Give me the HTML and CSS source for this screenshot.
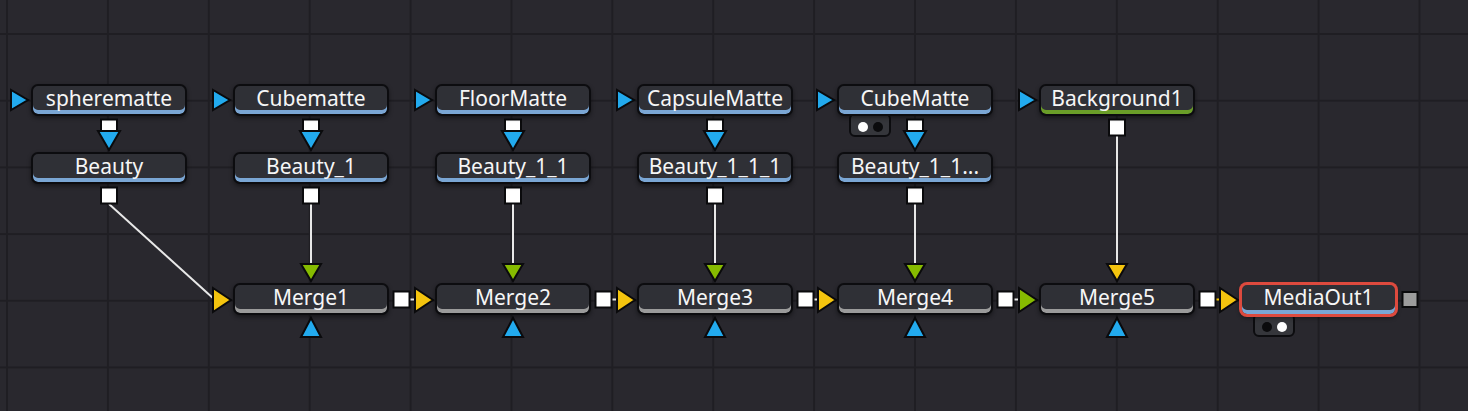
FILE: index.html
```html
<!DOCTYPE html>
<html>
<head>
<meta charset="utf-8">
<link rel="stylesheet" href="styles.css">
</head>
<body>
<div class="canvas">
  <svg class="wires" width="1468" height="411" viewBox="0 0 1468 411">
    <g class="links">
      <line x1="109" y1="204" x2="214" y2="299"/>
      <line x1="311" y1="204" x2="311" y2="264"/>
      <line x1="513" y1="204" x2="513" y2="264"/>
      <line x1="715" y1="204" x2="715" y2="264"/>
      <line x1="915" y1="204" x2="915" y2="264"/>
      <line x1="1117" y1="136" x2="1117" y2="264"/>
      <line x1="409" y1="299.5" x2="414" y2="299.5"/>
      <line x1="611" y1="299.5" x2="616" y2="299.5"/>
      <line x1="813" y1="299.5" x2="818" y2="299.5"/>
      <line x1="1013" y1="299.5" x2="1018" y2="299.5"/>
      <line class="yl" x1="1215" y1="299.5" x2="1220" y2="299.5"/>
    </g>
    <g class="ports">
      <polygon class="blue" points="11,90 11,110 28,100"/>
      <polygon class="blue" points="213,90 213,110 230,100"/>
      <polygon class="blue" points="415,90 415,110 432,100"/>
      <polygon class="blue" points="617,90 617,110 634,100"/>
      <polygon class="blue" points="817,90 817,110 834,100"/>
      <polygon class="blue" points="1019,90 1019,110 1036,100"/>
      <rect class="out" x="101" y="119.5" width="16" height="15"/>
      <rect class="out" x="303" y="119.5" width="16" height="15"/>
      <rect class="out" x="505" y="119.5" width="16" height="15"/>
      <rect class="out" x="707" y="119.5" width="16" height="15"/>
      <rect class="out" x="907" y="119.5" width="16" height="15"/>
      <rect class="out" x="1109" y="119.5" width="16" height="16"/>
      <polygon class="blue" points="98,131 120,131 109,150"/>
      <polygon class="blue" points="300,131 322,131 311,150"/>
      <polygon class="blue" points="502,131 524,131 513,150"/>
      <polygon class="blue" points="704,131 726,131 715,150"/>
      <polygon class="blue" points="904,131 926,131 915,150"/>
      <rect class="out" x="101" y="187.5" width="16" height="16"/>
      <rect class="out" x="303" y="187.5" width="16" height="16"/>
      <rect class="out" x="505" y="187.5" width="16" height="16"/>
      <rect class="out" x="707" y="187.5" width="16" height="16"/>
      <rect class="out" x="907" y="187.5" width="16" height="16"/>
      <polygon class="green" points="301,264 321,264 311,281"/>
      <polygon class="green" points="503,264 523,264 513,281"/>
      <polygon class="green" points="705,264 725,264 715,281"/>
      <polygon class="green" points="905,264 925,264 915,281"/>
      <polygon class="yellow" points="1107,264 1127,264 1117,281"/>
      <polygon class="blue" points="301,337 321,337 311,318"/>
      <polygon class="blue" points="503,337 523,337 513,318"/>
      <polygon class="blue" points="705,337 725,337 715,318"/>
      <polygon class="blue" points="905,337 925,337 915,318"/>
      <polygon class="blue" points="1107,337 1127,337 1117,318"/>
      <polygon class="yellow" points="213,288 213,312 231,300"/>
      <polygon class="yellow" points="415,288 415,312 433,300"/>
      <polygon class="yellow" points="617,288 617,312 635,300"/>
      <polygon class="yellow" points="818,288 818,312 836,300"/>
      <polygon class="green" points="1019,288 1019,312 1037,300"/>
      <polygon class="yellow" points="1220,288 1220,312 1238,300"/>
      <rect class="out" x="393.5" y="291.5" width="16" height="16"/>
      <rect class="out" x="595.5" y="291.5" width="16" height="16"/>
      <rect class="out" x="797.5" y="291.5" width="16" height="16"/>
      <rect class="out" x="997.5" y="291.5" width="16" height="16"/>
      <rect class="out" x="1199.5" y="291.5" width="16" height="16"/>
      <rect class="out gray" x="1402.5" y="292" width="15" height="15"/>
    </g>
  </svg>

  <div class="dots dots-cube"><span class="dot white"></span><span class="dot black"></span></div>
  <div class="dots dots-media"><span class="dot black"></span><span class="dot white"></span></div>

  <div class="node c1 r1">spherematte</div>
  <div class="node c2 r1">Cubematte</div>
  <div class="node c3 r1">FloorMatte</div>
  <div class="node c4 r1">CapsuleMatte</div>
  <div class="node c5 r1">CubeMatte</div>
  <div class="node c6 r1 bg">Background1</div>

  <div class="node c1 r2">Beauty</div>
  <div class="node c2 r2">Beauty_1</div>
  <div class="node c3 r2">Beauty_1_1</div>
  <div class="node c4 r2">Beauty_1_1_1</div>
  <div class="node c5 r2">Beauty_1_1...</div>

  <div class="node c2 r3 merge">Merge1</div>
  <div class="node c3 r3 merge">Merge2</div>
  <div class="node c4 r3 merge">Merge3</div>
  <div class="node c5 r3 merge">Merge4</div>
  <div class="node c6 r3 merge">Merge5</div>
  <div class="node c7 r3 selected">MediaOut1</div>
</div>
</body>
</html>
```

FILE: styles.css
```css
html, body {
  margin: 0;
  padding: 0;
  background: #29282e;
  overflow: hidden;
}

.canvas {
  position: relative;
  width: 1468px;
  height: 411px;
  background-color: #29282e;
  background-image:
    linear-gradient(to right, #1f1e23 2px, transparent 2px),
    linear-gradient(to bottom, #1f1e23 2px, transparent 2px);
  background-size: 100.9px 66.7px;
  background-position: 6px 33px;
  font-family: "Noto Sans", "Open Sans", sans-serif;
}

.wires {
  position: absolute;
  left: 0;
  top: 0;
}

.links line {
  stroke: #e8e8e8;
  stroke-width: 2;
}

.links line.yl {
  stroke: #f2c200;
}

.ports polygon,
.ports rect {
  stroke: #0a0a0c;
  stroke-width: 2;
  stroke-linejoin: miter;
}

.ports .blue { fill: #22aaee; }
.ports .green { fill: #86bb00; }
.ports .yellow { fill: #f4c40e; }
.ports .out { fill: #ffffff; }
.ports .out.gray { fill: #9c9c9c; }

.node {
  position: absolute;
  box-sizing: border-box;
  width: 156px;
  height: 32px;
  border: 2px solid #0c0c0f;
  border-radius: 7px;
  background: #2f3036;
  box-shadow: inset 0 -4px 0 #7aa6d4, 0 2px 4px rgba(0, 0, 0, 0.45);
  padding-bottom: 4px;
  color: #f6f6f6;
  font-size: 21px;
  line-height: 24px;
  text-align: center;
  white-space: nowrap;
  overflow: hidden;
}

.node.merge {
  box-shadow: inset 0 -4px 0 #9b9b9b, 0 2px 4px rgba(0, 0, 0, 0.45);
}

.node.bg {
  box-shadow: inset 0 -4px 0 #6a9d28, 0 2px 4px rgba(0, 0, 0, 0.45);
}

.node.selected {
  width: 157px;
  height: 33px;
  border-color: #dd4a3e;
  box-shadow: inset 0 -4px 0 #7aa6d4, 0 0 0 1px #dd4a3e, 0 2px 4px rgba(0, 0, 0, 0.45);
  padding-bottom: 5px;
}

.c1 { left: 31px; }
.c2 { left: 233px; }
.c3 { left: 435px; }
.c4 { left: 637px; }
.c5 { left: 837px; }
.c6 { left: 1039px; }
.c7 { left: 1240px; }

.r1 { top: 84px; }
.r2 { top: 152px; }
.r3 { top: 283px; }

.dots {
  position: absolute;
  box-sizing: border-box;
  width: 42px;
  height: 24px;
  background: #35363b;
  border: 2px solid #0c0c0f;
  border-radius: 6px;
  display: flex;
  align-items: center;
  justify-content: center;
  gap: 5px;
  padding-top: 4px;
}

.dots-cube {
  left: 849px;
  top: 113px;
}

.dots-media {
  left: 1253px;
  top: 313px;
}

.dot {
  width: 10px;
  height: 10px;
  border-radius: 50%;
}

.dot.white { background: #ffffff; }
.dot.black { background: #0b0b0d; }
```
